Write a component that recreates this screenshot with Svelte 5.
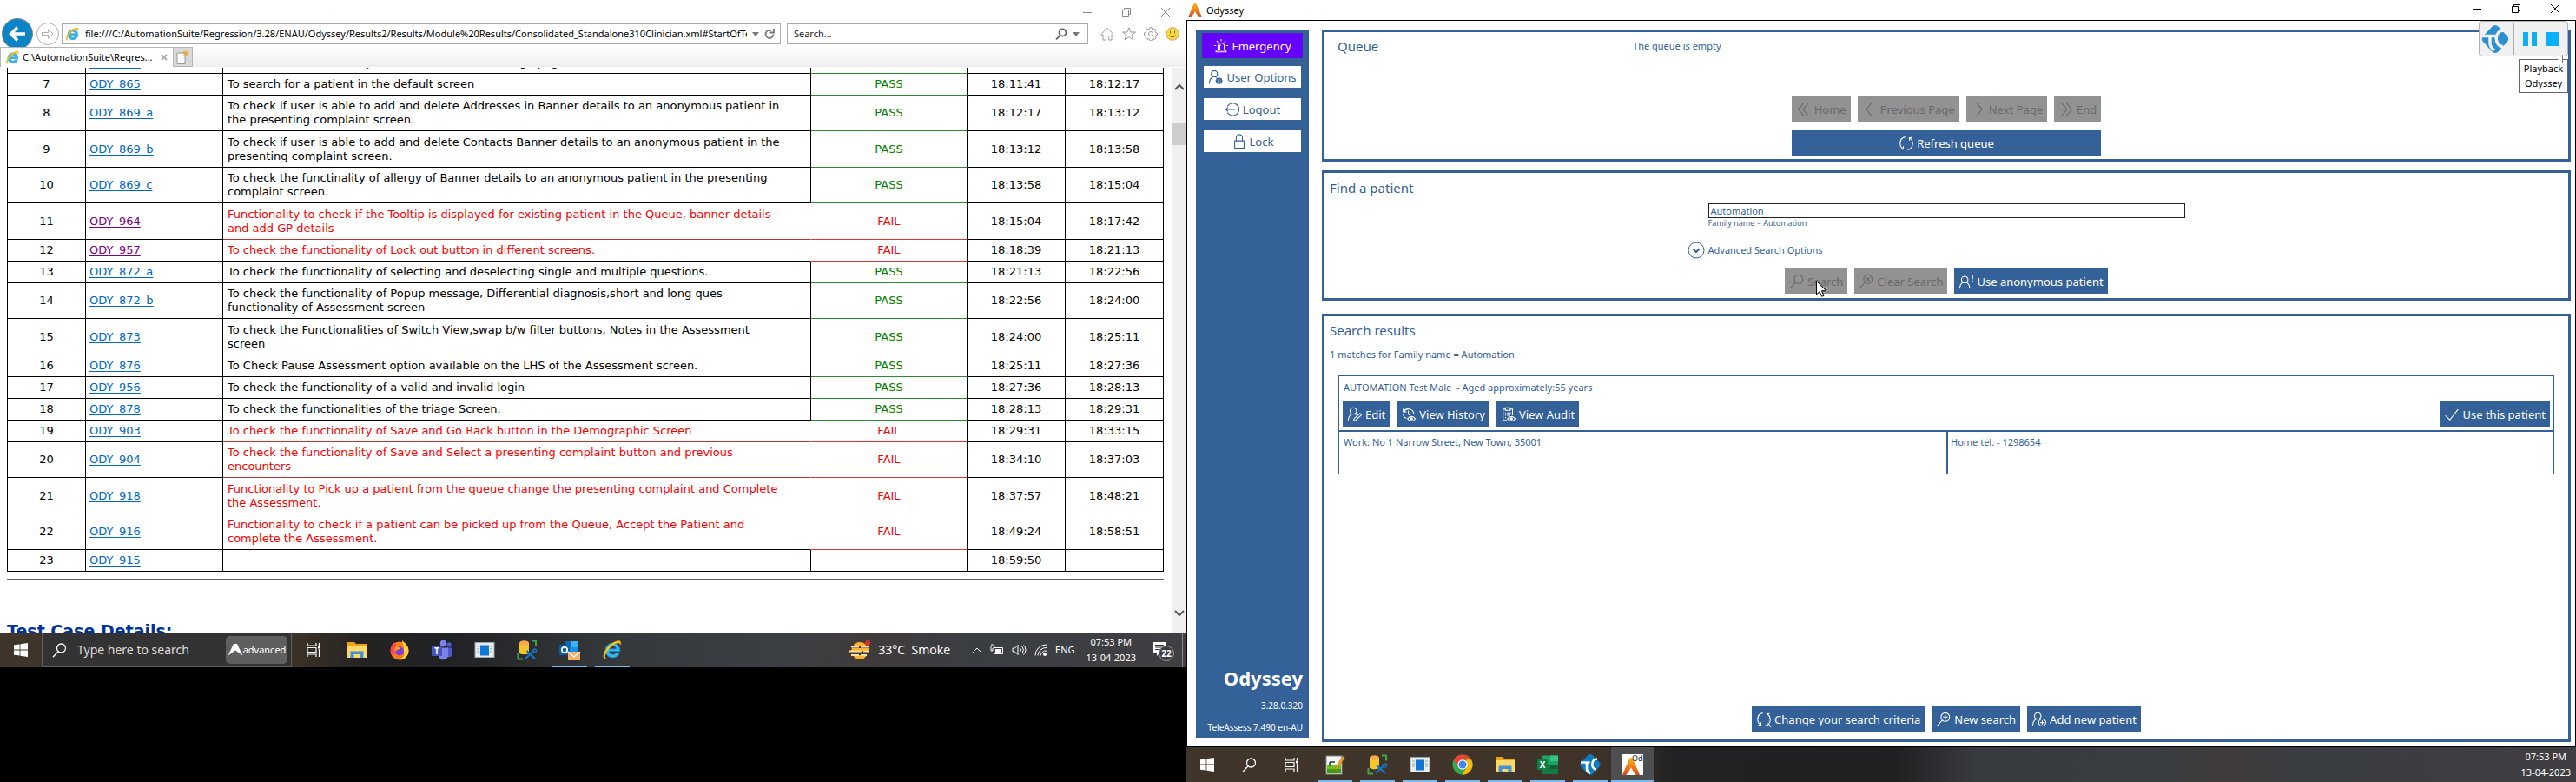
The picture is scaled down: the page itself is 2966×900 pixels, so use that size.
<script>
  let query = $state('Automation');

  const rows = [
    { n: 6, id: 'ODY_864', text: 'To check the functionality of Banner details and triage page', status: 'PASS', start: '18:10:35', end: '18:11:41' },
    { n: 7, id: 'ODY_865', text: 'To search for a patient in the default screen', status: 'PASS', start: '18:11:41', end: '18:12:17' },
    { n: 8, id: 'ODY_869_a', text: 'To check if user is able to add and delete Addresses in Banner details to an anonymous patient in\nthe presenting complaint screen.', status: 'PASS', start: '18:12:17', end: '18:13:12' },
    { n: 9, id: 'ODY_869_b', text: 'To check if user is able to add and delete Contacts Banner details to an anonymous patient in the\npresenting complaint screen.', status: 'PASS', start: '18:13:12', end: '18:13:58' },
    { n: 10, id: 'ODY_869_c', text: 'To check the functinality of allergy of Banner details to an anonymous patient in the presenting\ncomplaint screen.', status: 'PASS', start: '18:13:58', end: '18:15:04' },
    { n: 11, id: 'ODY_964', visited: true, text: 'Functionality to check if the Tooltip is displayed for existing patient in the Queue, banner details\nand add GP details', status: 'FAIL', start: '18:15:04', end: '18:17:42' },
    { n: 12, id: 'ODY_957', visited: true, text: 'To check the functionality of Lock out button in different screens.', status: 'FAIL', start: '18:18:39', end: '18:21:13' },
    { n: 13, id: 'ODY_872_a', text: 'To check the functionality of selecting and deselecting single and multiple questions.', status: 'PASS', start: '18:21:13', end: '18:22:56' },
    { n: 14, id: 'ODY_872_b', text: 'To check the functionality of Popup message, Differential diagnosis,short and long ques\nfunctionality of Assessment screen', status: 'PASS', start: '18:22:56', end: '18:24:00' },
    { n: 15, id: 'ODY_873', text: 'To check the Functionalities of Switch View,swap b/w filter buttons, Notes in the Assessment\nscreen', status: 'PASS', start: '18:24:00', end: '18:25:11' },
    { n: 16, id: 'ODY_876', text: 'To Check Pause Assessment option available on the LHS of the Assessment screen.', status: 'PASS', start: '18:25:11', end: '18:27:36' },
    { n: 17, id: 'ODY_956', text: 'To check the functionality of a valid and invalid login', status: 'PASS', start: '18:27:36', end: '18:28:13' },
    { n: 18, id: 'ODY_878', text: 'To check the functionalities of the triage Screen.', status: 'PASS', start: '18:28:13', end: '18:29:31' },
    { n: 19, id: 'ODY_903', text: 'To check the functionality of Save and Go Back button in the Demographic Screen', status: 'FAIL', start: '18:29:31', end: '18:33:15' },
    { n: 20, id: 'ODY_904', text: 'To check the functionality of Save and Select a presenting complaint button and previous\nencounters', status: 'FAIL', start: '18:34:10', end: '18:37:03' },
    { n: 21, id: 'ODY_918', text: 'Functionality to Pick up a patient from the queue change the presenting complaint and Complete\nthe Assessment.', status: 'FAIL', start: '18:37:57', end: '18:48:21' },
    { n: 22, id: 'ODY_916', text: 'Functionality to check if a patient can be picked up from the Queue, Accept the Patient and\ncomplete the Assessment.', status: 'FAIL', start: '18:49:24', end: '18:58:51' },
    { n: 23, id: 'ODY_915', text: '', status: '', start: '18:59:50', end: '' }
  ];

  const leftApps = [
    { name: 'explorer' }, { name: 'firefox' }, { name: 'teams' }, { name: 'window' },
    { name: 'tools' }, { name: 'outlook', open: true }, { name: 'ie', open: true }
  ];
  const rightApps = [
    { name: 'notepad' }, { name: 'tools' }, { name: 'window' }, { name: 'chrome' },
    { name: 'explorer' }, { name: 'excel' }, { name: 'testcomplete' }
  ];
</script>

{#snippet line(name)}
  <svg class="ico" viewBox="0 0 20 20" fill="none" stroke="currentColor" stroke-width="1.2" aria-hidden="true">
    {#if name === 'siren'}
      <path d="M6 15V10a4 4 0 0 1 8 0v5M3.500 17.500v-2.300h13v2.300zM8.300 15v-4.500a2 2 0 0 1 1.500-2M10 1v2.500M4.300 3.300l1.600 1.900M15.700 3.300l-1.600 1.900M1 9.500h2.500M16.500 9.500H19" />
    {:else if name === 'useroptions'}
      <circle cx="8" cy="5.500" r="4" /><path d="M1.500 18c.2-4 1.500-6.500 4.500-8.800M9.500 9.200l1.500 1" />
      <circle cx="14" cy="14.500" r="3" stroke-width="2" /><circle cx="14" cy="14.500" r="1" /><path d="M14 9.800v1.500M14 17.700v1.500M9.300 14.500h1.500M17.200 14.500h1.500M10.700 11.200l1 1M16.300 16.800l1 1M17.300 11.200l-1 1M11.700 16.800l-1 1" />
    {:else if name === 'logout'}
      <path d="M3.500 6a8 8 0 1 1 0 8M1 10h12M4.300 7.300 1.500 10l2.800 2.700" />
    {:else if name === 'lock'}
      <path d="M4 9h12v9.500H4zM6 9V5a4 4 0 0 1 8 0v4" />
    {:else if name === 'first'}
      <path d="M10 1.500 3 10l7 8.500M16 1.500 9 10l7 8.500" />
    {:else if name === 'prev'}
      <path d="M12.500 1.500 5.500 10l7 8.500" />
    {:else if name === 'next'}
      <path d="m7.500 1.500 7 8.500-7 8.500" />
    {:else if name === 'last'}
      <path d="m4 1.500 7 8.500-7 8.500M10 1.500l7 8.500-7 8.500" />
    {:else if name === 'refresh' || name === 'change'}
      <path d="M8.500 1.800C4.800 2.500 2 5.500 2 10c0 3 1.500 5.500 4 7M2.800 17.400l3.400-.2-.2-3.500M11.500 18.200C15.200 17.500 18 14.500 18 10c0-3-1.500-5.500-4-7M17.200 2.600l-3.400.2.200 3.500" />
      {#if name === 'change'}<path d="m15 15 4 4.500" />{/if}
    {:else if name === 'search' || name === 'clear' || name === 'new'}
      <circle cx="12" cy="7" r="5.500" /><path d="m8 11-6.500 7.500" />
      {#if name === 'clear'}<path d="m9.800 4.800 4.400 4.400M14.200 4.800 9.800 9.200" />{/if}
      {#if name === 'new'}<path d="M12 4v6M9 7h6" />{/if}
    {:else if name === 'anon'}
      <circle cx="8" cy="7.500" r="4.200" /><path d="M1.500 19c.3-4.500 2-6.500 4.300-7.800M14.500 19c-.3-4.500-2-6.500-4.300-7.800M18 1v6M18 8.500v1.500" />
    {:else if name === 'edit'}
      <circle cx="8" cy="5.500" r="4.200" /><path d="M1.500 18c.3-4.500 2-7 4.500-8.500M10 9.500l1.800 1M9 15.500l7.500-7 2 2-7.500 7-2.600.7z" />
    {:else if name === 'history'}
      <path d="M3.500 6.500A7 7 0 0 1 16.500 9M3 2.500v4h4M3 9.500c0 2.500 1.500 4.500 4 5.500M9.500 5v4.500l3 1.800" />
      <path d="M8.500 15.500c2.500-3.800 7.500-3.800 10 0-2.500 3.800-7.500 3.800-10 0z" /><circle cx="13.500" cy="15.500" r="1.300" fill="currentColor" />
    {:else if name === 'audit'}
      <path d="M8 17.500H3V3h3M12 3h3v8M6 1.500h6v3.300H6zM5.500 8h1M8 8h5M5.500 11h1M8 11h4M5.500 14h1" />
      <path d="M8.500 15.500c2.500-3.800 7.500-3.800 10 0-2.500 3.800-7.500 3.800-10 0z" /><circle cx="13.500" cy="15.500" r="1.300" fill="currentColor" />
    {:else if name === 'check'}
      <path d="m2 11.500 5.500 5.500L18 3.500" />
    {:else if name === 'add'}
      <circle cx="8" cy="5.500" r="4.200" /><path d="M1.500 18c.3-4.500 2-7 4.500-8.500" /><circle cx="13.800" cy="14" r="4.500" /><path d="M13.800 11.500v5M11.300 14h5" />
    {/if}
  </svg>
{/snippet}

{#snippet ieLogo(size)}
  <svg width={size} height={size} viewBox="0 0 24 24" aria-hidden="true">
    <path d="M12.500 4a8.500 8.500 0 1 0 8 11.300h-4.300a4.300 4.300 0 0 1-7.800-1.600h12.500A8.500 8.500 0 0 0 12.500 4zM8.400 10.800a4.200 4.200 0 0 1 8.200 0z" fill="#35b5ee" stroke="#1b7fc4" stroke-width=".6" />
    <path d="M4.500 21.500C0 23 1 15 7 8.500S21.500-.5 21.800 3.500c.1 1-.2 2-.7 3 .2-2.600-2-3.300-5.600-1.500C9.500 8 3.500 15.500 3.700 19.500c.1 1 .4 1.600.8 2z" fill="#f6c625" stroke="#d9a010" stroke-width=".4" />
  </svg>
{/snippet}

{#snippet app(name)}
  {#if name === 'ie'}
    {@render ieLogo(24)}
  {:else}
    <svg width="24" height="24" viewBox="0 0 24 24" aria-hidden="true">
      {#if name === 'explorer'}
        <path d="M1 3h8l2 2h12v16H1z" fill="#e8a317" /><path d="M1 7h22v14H1z" fill="#ffd868" /><path d="M4.500 21v-7.500h15V21h-4v-4h-7v4z" fill="#3f94d8" />
      {:else if name === 'firefox'}
        <circle cx="12" cy="13" r="10.500" fill="#ff7a1a" />
        <path d="M15 1c2 2 7.500 6 7.500 12A10.500 10.500 0 0 1 12 23.500c5-3 7-7 4.500-11C18 8 15 5 15 1z" fill="#ffd43a" />
        <path d="M2 9c1-3 3-5 4-6 0 2 1 3 3 3-3 2-5 6-2 12-4-1-6-5-5-9z" fill="#ff3d5e" />
        <circle cx="12" cy="13.500" r="5" fill="#7a3fe0" /><path d="M7 9c3-1 5 0 6 2-3 0-4 1-5 3z" fill="#ffa126" />
      {:else if name === 'teams'}
        <circle cx="20" cy="6" r="2.700" fill="#5059c9" /><circle cx="13.500" cy="4.500" r="3.700" fill="#7b83eb" />
        <path d="M16 9.500h8v7c0 3-3.500 5-6 3z" fill="#5059c9" /><path d="M8 9.500h11v8.500c0 7-11 7-11 0z" fill="#7b83eb" />
        <rect x="0" y="7" width="12" height="12" rx="1" fill="#4b53bc" /><text x="6" y="16.500" text-anchor="middle" font-size="10" font-weight="700" fill="#fff">T</text>
      {:else if name === 'window'}
        <rect x="1" y="3.500" width="22" height="17" fill="#e9edf0" stroke="#9aa4ab" /><rect x="7" y="6.500" width="10" height="12" fill="#0f78d4" /><path d="M3 8h3M3 11h3M3 14h3M18 8h3M18 11h3M18 14h3" stroke="#9aa4ab" />
      {:else if name === 'tools'}
        <path d="M3 4v11c0 3 11 3 11 0V4z" fill="#f5c72c" /><ellipse cx="8.500" cy="4" rx="5.500" ry="2.800" fill="#f9a94b" />
        <path d="M17 1.500h5v6M1.500 16v6.500H7" fill="none" stroke="#3fa34a" stroke-width="2" />
        <path d="m10 22 10-9.500M11.500 13 21 22" stroke="#1874c4" stroke-width="2.400" /><circle cx="20.500" cy="13" r="2" fill="none" stroke="#1874c4" stroke-width="1.500" />
      {:else if name === 'outlook'}
        <path d="M6 2h16v15H6z" fill="#1a8fe0" /><path d="M6 2h8v7H6z" fill="#0f67b7" /><path d="M14 2h8v7h-8z" fill="#35b3f2" /><rect x="0" y="6" width="12" height="12" rx="1" fill="#0a5ea8" />
        <circle cx="6" cy="12" r="3.200" fill="none" stroke="#fff" stroke-width="1.800" /><rect x="10" y="14" width="14" height="10" fill="#efb070" /><path d="m10 14 7 6 7-6" fill="none" stroke="#fff" stroke-width="1.300" />
      {:else if name === 'notepad'}
        <rect x="2" y="2" width="18" height="21" fill="#f4f4f4" stroke="#8a8a8a" /><path d="M3 12h16v10H3z" fill="#72c51f" /><path d="M3 17h16v5H3z" fill="#3d9c12" /><path d="M6 9v5M6 9h6" stroke="#333" stroke-width="1.500" />
        <path d="M21 2 13 15l-1 4 3-2.500L23.500 4z" fill="#f0a325" stroke="#9a5b10" stroke-width=".5" />
      {:else if name === 'chrome'}
        <circle cx="12" cy="12" r="11.500" fill="#34a853" /><path d="M2 6.200A11.500 11.500 0 0 1 22 6.500H12L7 15z" fill="#ea4335" /><path d="M22 6.300A11.500 11.500 0 0 1 11.500 23.500L17 15l-1-8.700z" fill="#fbbc05" />
        <circle cx="12" cy="12" r="5.700" fill="#fff" /><circle cx="12" cy="12" r="4.500" fill="#4285f4" />
      {:else if name === 'excel'}
        <path d="M6 1.500h18v21H6z" fill="#21a366" /><path d="M6 12h18v10.500H6z" fill="#107c41" /><path d="M15 1.500h9V8h-9z" fill="#33c481" /><path d="M15 12h9v5h-9z" fill="#185c37" />
        <rect x="0" y="6" width="12" height="12" rx="1" fill="#107c41" /><text x="6" y="16" text-anchor="middle" font-size="10" font-weight="700" fill="#fff">X</text>
      {:else if name === 'testcomplete'}
        <path d="M12 0q2 0 3.500 2L23 10q1.500 2 0 4l-7.500 8q-3.500 4-7 0L1 14q-1.500-2 0-4l7.500-8Q10 0 12 0z" fill="#0d7cc4" /><path d="M1 9.500h10.500M8 9.500V17q0 3 4 5M20 5.500c-7 0-8 11-1 12" fill="none" stroke="#fff" stroke-width="2.600" />
      {/if}
    </svg>
  {/if}
{/snippet}

{#snippet start()}
  <button class="task" aria-label="Start">
    <svg width="16" height="16" viewBox="0 0 16 16" fill="#fff"><path d="M0 2.300 6.600 1.400v6.200H0zM7.400 1.300 16 0v7.600H7.400zM0 8.400h6.600v6.200L0 13.700zM7.400 8.400H16V16l-8.600-1.300z" /></svg>
  </button>
{/snippet}

{#snippet taskView()}
  <button class="task view" aria-label="Task view">
    <svg width="17" height="16" viewBox="0 0 17 16" fill="none" stroke="#fff" stroke-width="1.200"><path d="M1 0v3h10V0M1 16v-3h10v3M1 5.500h10v5H1zM14.500 0v3M14.500 7v9" /><path d="M13 3.500h3v3h-3z" fill="#fff" stroke="none" /></svg>
  </button>
{/snippet}

{#snippet glass()}
  <svg width="17" height="17" viewBox="0 0 17 17" fill="none" stroke="#fff" stroke-width="1.300" aria-hidden="true"><circle cx="10.500" cy="6" r="5" /><path d="m7 9.800-6 6.500" /></svg>
{/snippet}

{#snippet controls()}
  <div class="controls">
    <button aria-label="Minimise"><svg width="10" height="10" viewBox="0 0 10 10"><path d="M0 5.500h10" /></svg></button>
    <button aria-label="Restore"><svg width="10" height="10" viewBox="0 0 10 10"><path d="M.5 2.500h7v7h-7zM2.500 2.500v-2h7v7h-2" /></svg></button>
    <button aria-label="Close"><svg width="10" height="10" viewBox="0 0 10 10"><path d="m0 0 10 10M10 0 0 10" /></svg></button>
  </div>
{/snippet}

{#snippet flame(size)}
  <svg width={size} height={size} viewBox="0 0 16 16" aria-hidden="true">
    <defs><linearGradient id="flame" x1="0" y1="0" x2="0" y2="1"><stop offset="0" stop-color="#fbb414" /><stop offset="1" stop-color="#dd4a1c" /></linearGradient></defs>
    <path d="M6.300 1q1.700-2 3.400 0L16 16h-3.500Q9.500 12 8 9q-1.500 3-4.500 7H0z" fill="url(#flame)" />
  </svg>
{/snippet}

<div class="screens">
  <section class="left">
    <div class="browser">
      <div class="lefttitle">{@render controls()}</div>
      <div class="toolbar">
        <div class="toolrow">
          <button class="back" aria-label="Back"><svg width="20" height="18" viewBox="0 0 20 18" fill="none" stroke="#fff" stroke-width="3.500"><path d="M19 9H3M10 1.500 2.500 9l7.500 7.500" /></svg></button>
          <button class="fwd" aria-label="Forward"><svg width="14" height="12" viewBox="0 0 14 12" fill="none" stroke="#aaa"><path d="M.5 4.500h7v-3.700L13 6l-5.500 5.200V7.500h-7z" /></svg></button>
          <div class="address">
            {@render ieLogo(17)}
            <input aria-label="Address" value="file:///C:/AutomationSuite/Regression/3.28/ENAU/Odyssey/Results2/Results/Module%20Results/Consolidated_Standalone310Clinician.xml#StartOfTest" />
            <span class="caret"></span>
            <button aria-label="Reload"><svg width="12" height="12" viewBox="0 0 12 12" fill="none" stroke="#777" stroke-width="1.800"><path d="M10.500 6.500A4.500 4.500 0 1 1 8 2.300M6.500 4.500H11V0" /></svg></button>
          </div>
          <div class="address find-box">
            <input aria-label="Search the web" placeholder="Search..." />
            <button aria-label="Go"><svg width="14" height="14" viewBox="0 0 14 14" fill="none" stroke="#666" stroke-width="1.800"><circle cx="8.500" cy="5.500" r="4" /><path d="M6 8.500 1 13.300" /></svg></button>
            <span class="caret"></span>
          </div>
          <div class="tools">
            <svg viewBox="0 0 16 16"><path d="m.7 8.500 7.300-7 7.300 7-1.300 1.200-1-1V15H9.700v-4.500H6.300V15H3V8.700l-1 1z" /></svg>
            <svg viewBox="0 0 16 16"><path d="m8 .8 2 5.200h5.500L11 9.300l1.800 5.700L8 11.700 3.200 15 5 9.300.500 6H6z" /></svg>
            <svg viewBox="0 0 16 16"><circle cx="8" cy="8" r="2.500" /><path d="M6.800.7h2.400l.4 2 1.400.6 1.700-1.100 1.600 1.600-1.100 1.700.6 1.400 1.600.3v2.200l-1.800.5-.5 1.300 1.100 1.700-1.600 1.700-1.700-1.100-1.400.6-.4 1.800H6.800l-.4-1.900-1.300-.6-1.700 1.200-1.700-1.700 1.200-1.700L2.300 9.500.500 9.200V6.900l1.900-.4.500-1.300-1.100-1.700 1.600-1.700 1.700 1.100 1.300-.5z" /></svg>
            <svg viewBox="0 0 16 16"><circle cx="8" cy="8" r="7.300" fill="#ffd93b" stroke="#b9a878" /><path d="M5.500 4.500v3M10.500 4.500v3M4.500 9.500c1.500 3 5.500 3 7 0" stroke="#7a6220" /></svg>
          </div>
        </div>
      </div>
      <div class="tabs">
        <div class="tab">{@render ieLogo(17)}<span>C:\AutomationSuite\Regres...</span><button aria-label="Close tab"><svg width="8" height="8" viewBox="0 0 8 8" stroke="#aaa" stroke-width="2"><path d="m1 1 6 6M7 1 1 7" /></svg></button></div>
        <button class="newtab" aria-label="New tab"><svg width="15" height="16" viewBox="0 0 15 16"><path d="M1 3h9v12.500H1z" fill="#fff" stroke="#999" /><path d="M11 0v7M7.500 3.500h7M8.500 1l5 5M13.500 1l-5 5" stroke="#f0a020" /></svg></button>
      </div>
      <div class="page">
        <div class="doc">
          <table>
            <colgroup><col class="c1" /><col class="c2" /><col class="c3" /><col class="c4" /><col class="c5" /><col class="c6" /></colgroup>
            <tbody>
              {#each rows as r (r.n)}
                <tr class:long={r.text.includes('\n')} class:pass={r.status === 'PASS'} class:fail={r.status === 'FAIL'}>
                  <td>{r.n}</td>
                  <td class="id"><a href={'#' + r.id} class:visited={r.visited}>{r.id}</a></td>
                  <td class="desc">{r.text}</td>
                  <td class="status">{r.status}</td>
                  <td>{r.start}</td>
                  <td>{r.end}</td>
                </tr>
              {/each}
            </tbody>
          </table>
          <hr />
          <h2>Test Case Details:</h2>
        </div>
        <div class="scroll" aria-hidden="true">
          <svg width="12" height="8" viewBox="0 0 12 8"><path d="m1 7 5-5 5 5" /></svg>
          <span class="thumb"></span>
          <svg class="down" width="12" height="8" viewBox="0 0 12 8"><path d="m1 1 5 5 5-5" /></svg>
        </div>
      </div>
    </div>
    <div class="taskbar">
      {@render start()}
      <div class="searchbar">
        {@render glass()}
        <input aria-label="Type here to search" placeholder="Type here to search" />
        <span class="pill"><svg width="18" height="14" viewBox="0 0 18 14" fill="#fff"><path d="M7 0h4l6.500 13.500L9 7.500l-8.500 6z" /></svg>advanced</span>
      </div>
      {@render taskView()}
      {#each leftApps as a (a.name)}
        <button class="task wide" class:open={a.open} aria-label={a.name}>{@render app(a.name)}</button>
      {/each}
      <div class="tray">
        <svg width="24" height="22" viewBox="0 0 24 22"><path d="M4 7a9 9 0 0 1 16 0zM2 12h20v-3H3zM4 17a9 9 0 0 0 16 0z" fill="#ffb02e" /><path d="M2 7.500h9M13 7.500h9M0 12.500h14M16 12.500h6M2 17h9M13 17h7" stroke="#ffdf9a" stroke-width="2" /><circle cx="21" cy="3" r="3" fill="#d9302c" /></svg>
        <span class="weather">33°C&nbsp; Smoke</span>
        <svg width="12" height="8" viewBox="0 0 12 8"><path d="m1 7 5-5 5 5" /></svg>
        <svg width="16" height="14" viewBox="0 0 16 14"><path d="M4.500 4.500h10v7h-10zM1 2.500h4v2.500H3v3H1zM2 0v2M4 0v2" /><path d="M6 6h7v4H6z" fill="#fff" stroke="none" /></svg>
        <svg width="17" height="14" viewBox="0 0 17 14"><path d="M1 5h2.500L7 1.500v11L3.500 9H1zM9.500 4.500q2 2.500 0 5M11.500 3q3.500 4 0 8M13.500 1.500q5 5.500 0 11" /></svg>
        <svg width="15" height="14" viewBox="0 0 15 14"><path d="M1 13.500A12.500 12.500 0 0 1 14 1M4 13.500A9.500 9.500 0 0 1 14 4.500M7 13.500A6.500 6.500 0 0 1 14 8" /><circle cx="12" cy="12" r="2" fill="#fff" stroke="none" /></svg>
        <span class="eng">ENG</span>
        <span class="clock"><span>07:53 PM</span><span>13-04-2023</span></span>
        <span class="notes"><svg width="16" height="16" viewBox="0 0 16 16"><path d="M0 0h16v12H9l-4 4v-4H0z" fill="#fff" stroke="none" /><path d="M3 3.500h10M3 6h10M3 8.500h6" stroke="#333" /></svg><b>22</b></span>
        <span class="edge"></span>
      </div>
    </div>
  </section>

  <section class="right">
    <header class="apptitle">{@render flame(16)}<span>Odyssey</span>{@render controls()}</header>
    <div class="appbody">
      <nav class="side">
        <button class="emergency">{@render line('siren')}Emergency</button>
        <button>{@render line('useroptions')}User Options</button>
        <button>{@render line('logout')}Logout</button>
        <button>{@render line('lock')}Lock</button>
        <strong>Odyssey</strong>
        <small>3.28.0.320</small>
        <small>TeleAssess 7.490 en-AU</small>
      </nav>
      <main>
        <section class="panel queue">
          <div class="qhead"><h1>Queue</h1><span>The queue is empty</span></div>
          <div class="qbuttons">
            <div class="pager">
              <button class="btn" disabled>{@render line('first')}Home</button>
              <button class="btn" disabled>{@render line('prev')}Previous Page</button>
              <button class="btn" disabled>{@render line('next')}Next Page</button>
              <button class="btn" disabled>{@render line('last')}End</button>
            </div>
            <button class="btn">{@render line('refresh')}Refresh queue</button>
          </div>
        </section>
        <section class="panel find">
          <h1>Find a patient</h1>
          <div class="form">
            <input id="patient" aria-label="Patient search" bind:value={query} />
            <label for="patient">Family name = {query}</label>
            <button class="advanced"><svg width="20" height="20" viewBox="0 0 20 20" fill="none" stroke="currentColor"><circle cx="10" cy="10" r="9" /><path d="m6.500 8.500 3.500 3.500 3.500-3.500" stroke-width="2" /></svg>Advanced Search Options</button>
          </div>
          <div class="actions">
            <button class="btn" disabled>{@render line('search')}Search
              <svg class="cursor" width="12" height="19" viewBox="0 0 12 19"><path d="M.5.5v15.500l3.600-3.400 2.600 5.700 2.300-1-2.500-5.600h5z" fill="#fff" stroke="#000" /></svg>
            </button>
            <button class="btn" disabled>{@render line('clear')}Clear Search</button>
            <button class="btn">{@render line('anon')}Use anonymous patient</button>
          </div>
        </section>
        <section class="panel results">
          <h1>Search results</h1>
          <p>1 matches for Family name = Automation</p>
          <article>
            <div class="person">
              <p>AUTOMATION Test Male&nbsp; - Aged approximately:55 years</p>
              <div class="actions">
                <button class="btn">{@render line('edit')}Edit</button>
                <button class="btn">{@render line('history')}View History</button>
                <button class="btn">{@render line('audit')}View Audit</button>
                <button class="btn use">{@render line('check')}Use this patient</button>
              </div>
            </div>
            <div class="contact"><p>Work: No 1 Narrow Street, New Town, 35001</p><p>Home tel. - 1298654</p></div>
          </article>
          <div class="actions bottom">
            <button class="btn">{@render line('change')}Change your search criteria</button>
            <button class="btn">{@render line('new')}New search</button>
            <button class="btn">{@render line('add')}Add new patient</button>
          </div>
        </section>
      </main>
      <div class="recorder">
        <div class="logo">
          <svg width="32" height="32" viewBox="0 0 32 32"><path d="M16 0q2.500 0 4.500 2.500L30 13q2.500 3 0 6l-9.500 10.500q-4.500 5-9 0L2 19q-2.500-3 0-6l9.500-10.500Q13.500 0 16 0z" fill="#2b8fd0" /><path d="M0 12.500h16M10 12.500V21q0 4 5 8M26 6C15 6 14 23 25 25" fill="none" stroke="#f0f0f0" stroke-width="3.500" /></svg>
        </div>
        <button aria-label="Pause"><span class="pause"></span></button>
        <button aria-label="Stop"><span class="stop"></span></button>
      </div>
      <div class="tip"><span>Playback</span><span>Odyssey</span></div>
    </div>
    <div class="taskbar">
      {@render start()}
      <button class="task" aria-label="Search">{@render glass()}</button>
      {@render taskView()}
      {#each rightApps as a (a.name)}
        <button class="task wide open" aria-label={a.name}>{@render app(a.name)}</button>
      {/each}
      <button class="task wide open current" aria-label="Odyssey"><span class="odicon">{@render flame(20)}<i>Od</i></span></button>
      <div class="tray"><span class="clock"><span>07:53 PM</span><span>13-04-2023</span></span></div>
    </div>
  </section>
</div>

<style>
  :global(body) { margin: 0; background: #000; }
  .screens { display: grid; grid-template-columns: 1366fr 1600fr; height: 100vh; overflow: hidden; font: 11px/16px "Noto Sans", "Open Sans", sans-serif; color: #000; }
  .screens *, .screens *::before, .screens *::after { box-sizing: border-box; }
  button, input { font: inherit; color: inherit; border: 0; padding: 0; background: none; }
  svg { flex: none; }
  h1, h2, p { margin: 0; font-weight: 400; }

  .left { display: grid; grid-template-rows: minmax(0, 1fr) 40px; padding-bottom: 132px; min-width: 0; min-height: 0; }
  .browser { display: flex; flex-direction: column; background: #fff; overflow: hidden; }
  .controls { display: flex; margin-left: auto; }
  .controls button { width: 45px; height: 20px; display: grid; place-items: center; }
  .controls path { fill: none; stroke: currentColor; }
  .lefttitle { height: 21px; flex: none; display: flex; align-items: flex-end; padding-right: 2px; color: #888; }
  .lefttitle .controls { height: 14px; align-items: center; }
  .toolbar { height: 33px; flex: none; overflow: hidden; }
  .toolrow { height: 36px; display: flex; align-items: center; padding: 0 8px 0 2px; }
  .back { width: 36px; height: 36px; border-radius: 50%; background: #0a84c6; border: 1px solid #7a8a94; display: grid; place-items: center; }
  .fwd { width: 26px; height: 26px; margin: 0 3px 0 4px; border-radius: 50%; border: 1px solid #b0b0b0; display: grid; place-items: center; }
  .address { flex: 839 1 0; min-width: 0; height: 24px; border: 1px solid #ababab; display: flex; align-items: center; gap: 6px; padding: 0 6px 0 3px; }
  .address input { flex: 1; min-width: 0; outline: 0; }
  .address button { display: grid; }
  .find-box { flex-grow: 338; margin-left: 7px; padding: 0 9px 0 7px; }
  .address input::placeholder { color: #222; opacity: 1; }
  .caret { border: 4px solid transparent; border-top: 5px solid #777; border-bottom: 0; }
  .tools { display: flex; gap: 9px; margin-left: 14px; }
  .tools svg { width: 16px; height: 16px; fill: none; stroke: #999; }
  .tabs { height: 24px; flex: none; display: flex; background: linear-gradient(#fff, #eee); border-bottom: 1px solid #fff; }
  .tab { width: 200px; background: #fff; border: 1px solid #b5b5b5; border-bottom: 0; display: flex; align-items: center; gap: 3px; padding-left: 5px; }
  .tab button { margin-left: auto; padding-right: 6px; display: grid; }
  .newtab { width: 22px; background: #d9d9d9; border: 1px solid #b5b5b5; border-left: 0; display: grid; place-items: center; }

  .page { flex: 1; min-height: 0; display: flex; overflow: hidden; }
  .doc { flex: 1; min-width: 0; margin-top: -18px; padding: 0 9px 0 8px; font: 13px/16px "DejaVu Sans", Verdana, sans-serif; }
  table { width: 100%; table-layout: fixed; border-collapse: separate; border-spacing: 0; border-left: 1px solid #000; }
  .c1 { width: 90px; } .c2 { width: 158px; } .c4 { width: 180px; } .c5 { width: 113px; } .c6 { width: 113px; }
  td { height: 25px; padding: 0 5px; text-align: center; border-right: 1px solid #000; border-bottom: 1px solid #000; }
  .long td { height: 41px; }
  .long:nth-child(even) td { height: 42px; }
  td.id, td.desc { text-align: left; }
  td.id { padding-left: 4px; }
  td.id a { color: #06c; text-decoration-skip-ink: none; text-underline-offset: 2px; }
  td.id a.visited { color: #800080; }
  td.desc { white-space: pre-line; }
  .pass .status { color: #008000; border-bottom-color: #2f8a2f; }
  .fail .status, .fail .desc { color: #f00; }
  .fail .status { border-bottom-color: #d33; }
  .fail .desc { border-right-color: transparent; }
  .fail:has(+ .fail) .desc { border-bottom-color: #b33; }
  hr { margin: 8px 0 0; border: 0; border-top: 1px solid #666; border-bottom: 1px solid #e4e4e4; }
  h2 { margin-top: 47px; font-size: 19px; line-height: 22px; font-weight: 700; color: #039; }
  .scroll { width: 17px; background: #f0f0f0; display: flex; flex-direction: column; align-items: center; padding: 18px 0; }
  .scroll path { fill: none; stroke: #555; stroke-width: 2; }
  .thumb { width: 15px; height: 25px; margin-top: 38px; background: #cdcdcd; }
  .down { margin-top: auto; }

  .taskbar { height: 40px; display: flex; align-items: stretch; color: #fff; background: linear-gradient(90deg, #40352a 0, #3f3326 24%, #232324 31%, #212224 38%, #36393c 52%, #3b3f43 66%, #403b3b 74%, #3a3e43 82%, #403f43 100%); }
  .right .taskbar { background: linear-gradient(90deg, #40352a 0, #40342a 29%, #222224 35%, #202022 51%, #383b3f 57%, #393d41 70%, #403a3a 75%, #393d42 80%, #403e42 100%); }
  .task { width: 48px; display: grid; place-items: center; border-bottom: 2px solid transparent; border-top: 2px solid transparent; }
  .task.wide { width: 49px; }
  .task.view { width: 50px; }
  .task.open { background: linear-gradient(#76b9ed, #76b9ed) center bottom / 40px 2px no-repeat border-box; }
  .task.current { background: linear-gradient(#76b9ed, #76b9ed) center bottom / 100% 2px no-repeat border-box, #4d4e50; }
  .odicon { width: 24px; height: 24px; background: #fff; display: flex; align-items: flex-end; position: relative; overflow: hidden; }
  .odicon i { position: absolute; right: 0; top: -2px; font-style: normal; font-size: 9px; line-height: 14px; color: #222; }
  .searchbar { width: 288px; background: #333; border: 1px solid #606060; display: flex; align-items: center; gap: 12px; padding: 0 4px 0 11px; }
  .searchbar input { flex: 1; min-width: 0; font-size: 14px; line-height: 20px; outline: 0; }
  .searchbar input::placeholder { color: #ddd; opacity: 1; }
  .pill { width: 71px; height: 32px; border-radius: 5px; background: #5f5f5f; display: flex; align-items: center; justify-content: center; }
  .tray { margin-left: auto; display: flex; align-items: center; gap: 9px; }
  .tray svg { fill: none; stroke: #fff; stroke-width: 1; }
  .tray svg:first-child { stroke: none; }
  .weather { font-size: 14px; line-height: 20px; margin-right: 16px; white-space: nowrap; }
  .clock { display: grid; text-align: center; line-height: 18px; padding: 0 6px 0 4px; }
  .notes { display: block; position: relative; width: 25px; height: 18px; margin-left: 4px; }
  .notes b { position: absolute; left: 7px; top: 4px; width: 18px; height: 18px; border-radius: 50%; border: 1px solid #999; background: #3d3e41; font-size: 10px; line-height: 16px; text-align: center; }
  .edge { width: 5px; align-self: stretch; border-left: 1px solid #888; }

  .right { display: grid; grid-template-rows: 23px minmax(0, 1fr) 40px; background: #fff; min-width: 0; }
  .apptitle { display: flex; align-items: center; gap: 5px; padding: 0 2px; }
  .apptitle .controls { align-self: flex-start; }
  .appbody { position: relative; border: 1px solid #000; display: grid; grid-template-columns: 130px minmax(0, 1fr); gap: 15px; padding: 10px 5px 5px 10px; color: #336198; }
  .ico { width: 18px; height: 18px; }
  .side { background: #336198; margin-bottom: 5px; padding: 4px 7px; display: flex; flex-direction: column; color: #fff; text-align: right; }
  .side button { height: 25px; margin: 0 2px 12px; background: #fff; color: #336198; font-size: 13px; display: flex; align-items: center; justify-content: center; gap: 3px; }
  .side .emergency { height: 29px; margin: 0 0 9px; background: #60f; color: #fff; border: 1px solid #5a10d8; }
  .side strong { margin-top: auto; font-size: 22px; line-height: 30px; }
  .side small { font-size: 10px; line-height: 16px; margin-top: 9px; white-space: nowrap; }
  main { display: flex; flex-direction: column; min-width: 0; }
  .panel { border: 3px solid #336198; }
  h1 { font-size: 15px; line-height: 20px; }
  .queue { padding: 6px 0 4px; margin-bottom: 10px; display: grid; justify-items: center; }
  .qhead { justify-self: stretch; display: grid; grid-template-columns: 24% 1fr; align-items: center; padding-left: 15px; margin-bottom: 48px; }
  .qbuttons { display: grid; gap: 10px; }
  .pager, .actions { display: flex; gap: 8px; }
  .btn { height: 29px; padding: 0 5px; background: #336198; color: #fff; font-size: 13px; display: flex; align-items: center; justify-content: center; gap: 3px; white-space: nowrap; position: relative; }
  .btn:disabled { background: #929292; color: #6a6a6a; }
  .find { padding: 7px 0 5px; margin-bottom: 15px; }
  .find h1, .results h1 { padding-left: 6px; }
  .form { display: grid; grid-template-columns: 24px 549px 24px; justify-content: center; margin-top: 8px; }
  .form input { grid-column: 2; height: 17px; border: 1px solid #222; padding: 0 2px; }
  .form label { grid-column: 2; font-size: 9px; line-height: 12px; }
  .advanced { grid-column: 1 / 3; justify-self: start; height: 20px; margin: 15px 0 11px; display: flex; align-items: center; gap: 4px; }
  .find .actions, .bottom { justify-content: center; }
  .cursor { position: absolute; left: 36px; top: 14px; }
  .results { flex: 1; display: flex; flex-direction: column; padding: 6px 0 9px; }
  .results > p { padding-left: 6px; margin: 10px 0 16px; }
  article { margin: 0 16px; border: 1px solid #336198; }
  .person { padding: 5px 4px 4px; border-bottom: 2px solid #336198; }
  .person p { padding: 0 1px 8px; }
  .use { margin-left: auto; }
  .contact { display: grid; grid-template-columns: 1fr 1fr; }
  .contact p { height: 48px; padding: 4px 5px; }
  .contact p + p { border-left: 2px solid #336198; padding-left: 3px; }
  .bottom { margin-top: auto; }
  .recorder { position: absolute; right: 8px; top: 0; width: 103px; height: 41px; background: #f0f0f0; border: 1px solid #b0b0b0; border-radius: 4px; display: flex; align-items: center; padding-left: 2px; }
  .logo { width: 38px; height: 36px; border-right: 1px solid #aaa; display: grid; align-items: center; }
  .recorder button { display: grid; margin-left: 10px; }
  .pause { width: 16px; height: 16px; border: solid #0ab0fc; border-width: 0 6px; }
  .stop { width: 16px; height: 16px; background: #0ab0fc; }
  .tip { position: absolute; right: 8px; top: 44px; width: 57px; height: 39px; background: #fff; border: 1px solid #666; color: #000; display: grid; padding: 2px 4px; text-align: center; }
  .tip::before { content: ""; position: absolute; right: 5px; top: -6px; width: 9px; height: 9px; background: #fff; border: solid #777; border-width: 1px 1px 0 0; clip-path: polygon(100% 0, 100% 100%, 0 100%); }
  .tip span:first-child { border-bottom: 1px solid #000; }
</style>
